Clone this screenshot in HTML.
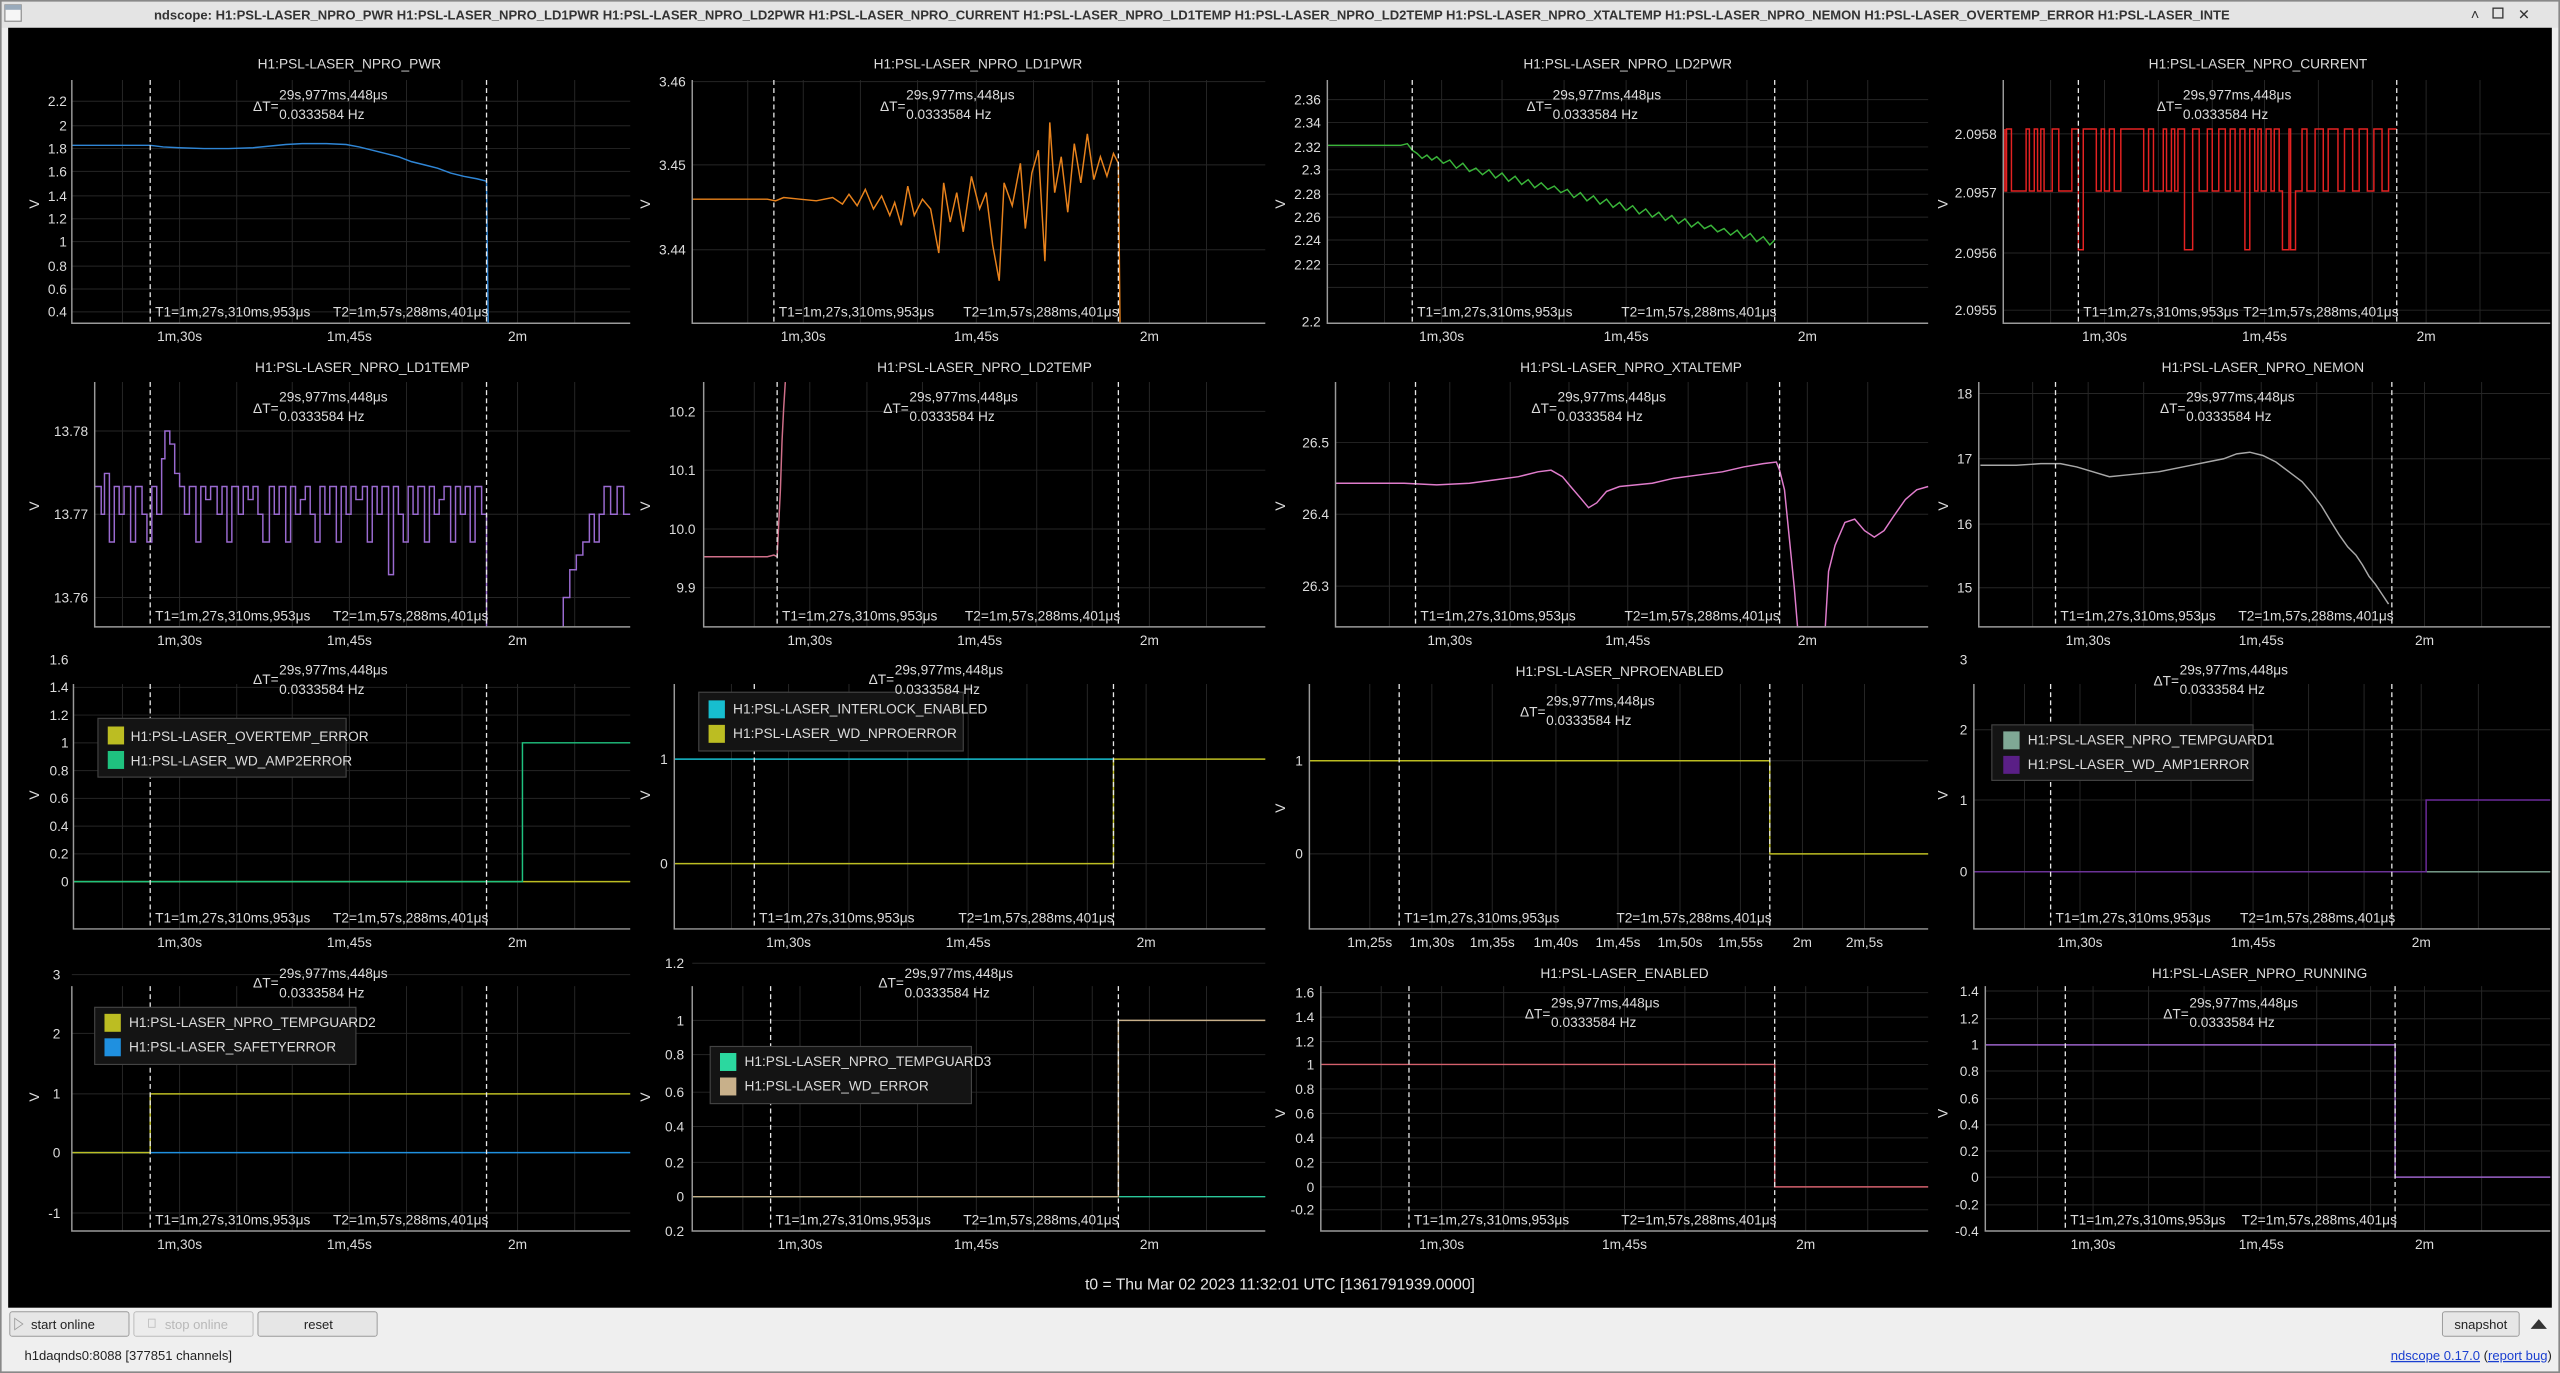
<!DOCTYPE html>
<html><head><meta charset="utf-8"><style>
html,body{margin:0;padding:0;background:#000;overflow:hidden}
svg{display:block}
text{font-family:"Liberation Sans",sans-serif;font-size:8.4px;fill:#dcdcdc}
.t{text-anchor:end}.m{text-anchor:middle}
.ax{stroke:#9a9a9a;stroke-width:0.9;fill:none}
.g{stroke:#262626;stroke-width:0.6}
.d{stroke:#e8e8e8;stroke-width:0.8;stroke-dasharray:3,2}
.tr{fill:none;stroke-width:0.9}
.lg{fill:#141414;stroke:#444;stroke-width:0.7}
</style></head><body>
<svg width="2560" height="1373" viewBox="0 0 1568 841" preserveAspectRatio="none" xmlns="http://www.w3.org/2000/svg">
<rect x="0" y="0" width="1568" height="841" fill="#efefef"/>
<rect x="0" y="0" width="1568" height="17" fill="#e4e4e4"/>
<rect x="3" y="3" width="10" height="10" fill="#f6f6f6" stroke="#8a8a8a" stroke-width="0.7"/>
<rect x="3" y="3" width="10" height="3" fill="#9ab"/>
<text x="730" y="12" class="m" style="font-weight:bold;font-size:8px;fill:#333">ndscope: H1:PSL-LASER_NPRO_PWR H1:PSL-LASER_NPRO_LD1PWR H1:PSL-LASER_NPRO_LD2PWR H1:PSL-LASER_NPRO_CURRENT H1:PSL-LASER_NPRO_LD1TEMP H1:PSL-LASER_NPRO_LD2TEMP H1:PSL-LASER_NPRO_XTALTEMP H1:PSL-LASER_NPRO_NEMON H1:PSL-LASER_OVERTEMP_ERROR H1:PSL-LASER_INTE</text>
<text x="1516" y="12" class="m" style="fill:#333;font-size:9px">˄</text>
<rect x="1527" y="5" width="6" height="6" fill="none" stroke="#333" stroke-width="0.8"/>
<text x="1546" y="12" class="m" style="fill:#333;font-size:9px">✕</text>
<rect x="5" y="17" width="1558" height="784" fill="#000"/>

<!-- P1 -->
<g>
<text x="214" y="42" class="m">H1:PSL-LASER_NPRO_PWR</text>
<path class="g" d="M44,62H386M44,77H386M44,91H386M44,105H386M44,120H386M44,134H386M44,148H386M44,163H386M44,177H386M44,191H386M75,49V198M110,49V198M145,49V198M179,49V198M214,49V198M249,49V198M283,49V198M317,49V198M352,49V198"/>
<g class="t"><text x="41" y="65">2.2</text><text x="41" y="80">2</text><text x="41" y="94">1.8</text><text x="41" y="108">1.6</text><text x="41" y="123">1.4</text><text x="41" y="137">1.2</text><text x="41" y="151">1</text><text x="41" y="166">0.8</text><text x="41" y="180">0.6</text><text x="41" y="194">0.4</text></g>
<polyline class="tr" stroke="#2f86d6" points="44,89 92,89 100,90 110,90.5 125,91 140,91 155,90.5 165,89.5 175,88.5 185,88 200,88 212,88.5 220,90 228,92 236,94 244,96 252,99 260,101 268,103 276,106 284,108 292,109.5 298,111 299,198"/>
<path class="ax" d="M44,49V198H386"/>
<line class="d" x1="92" y1="49" x2="92" y2="198"/><line class="d" x1="298" y1="49" x2="298" y2="198"/>
<text x="155" y="68">ΔT=</text><text x="171" y="61">29s,977ms,448μs</text><text x="171" y="73">0.0333584 Hz</text>
<text x="95" y="194">T1=1m,27s,310ms,953μs</text><text x="204" y="194">T2=1m,57s,288ms,401μs</text>
<text x="110" y="209" class="m">1m,30s</text><text x="214" y="209" class="m">1m,45s</text><text x="317" y="209" class="m">2m</text>
<text x="24" y="125" class="m" transform="rotate(-90 24 125)">V</text>
</g>
<!-- P2 -->
<g>
<text x="599" y="42" class="m">H1:PSL-LASER_NPRO_LD1PWR</text>
<path class="g" d="M424,50H775M424,101H775M424,153H775M458,49V198M492,49V198M527,49V198M562,49V198M598,49V198M633,49V198M669,49V198M704,49V198M739,49V198"/>
<g class="t"><text x="420" y="53">3.46</text><text x="420" y="104">3.45</text><text x="420" y="156">3.44</text></g>
<polyline class="tr" stroke="#e8821c" points="424,122 470,122 475,123 480,121 490,122 500,123 510,121 516,125 520,119 525,126 530,116 535,128 540,120 545,132 548,124 552,138 556,114 560,132 565,122 570,128 575,155 578,112 582,136 586,118 590,142 595,108 600,128 604,118 608,150 612,172 615,112 620,126 625,100 628,140 632,106 636,92 640,160 643,75 646,118 650,96 654,130 658,88 662,112 666,82 670,110 674,96 678,108 682,94 685,100 686,198"/>
<path class="ax" d="M424,49V198H775"/>
<line class="d" x1="474" y1="49" x2="474" y2="198"/><line class="d" x1="685" y1="49" x2="685" y2="198"/>
<text x="539" y="68">ΔT=</text><text x="555" y="61">29s,977ms,448μs</text><text x="555" y="73">0.0333584 Hz</text>
<text x="477" y="194">T1=1m,27s,310ms,953μs</text><text x="590" y="194">T2=1m,57s,288ms,401μs</text>
<text x="492" y="209" class="m">1m,30s</text><text x="598" y="209" class="m">1m,45s</text><text x="704" y="209" class="m">2m</text>
<text x="398" y="125" class="m" transform="rotate(-90 398 125)">V</text>
</g>
<!-- P3 -->
<g>
<text x="997" y="42" class="m">H1:PSL-LASER_NPRO_LD2PWR</text>
<path class="g" d="M813,61H1181M813,75H1181M813,90H1181M813,104H1181M813,119H1181M813,133H1181M813,147H1181M813,162H1181M813,176H1181M848,49V198M883,49V198M920,49V198M958,49V198M996,49V198M1033,49V198M1070,49V198M1107,49V198M1144,49V198"/>
<g class="t"><text x="809" y="64">2.36</text><text x="809" y="78">2.34</text><text x="809" y="93">2.32</text><text x="809" y="107">2.3</text><text x="809" y="122">2.28</text><text x="809" y="136">2.26</text><text x="809" y="150">2.24</text><text x="809" y="165">2.22</text><text x="809" y="200">2.2</text></g>
<polyline class="tr" stroke="#3ab53a" points="813,89 858,89 862,88 865,92 868,94 871,97 874,95 877,98 880,96 884,100 888,98 892,103 896,100 900,105 904,103 908,107 912,104 916,109 920,106 924,111 928,108 932,113 936,110 940,115 944,112 948,116 952,114 956,118 960,116 964,121 968,118 972,123 976,120 980,125 984,122 988,127 992,124 996,129 1000,126 1004,131 1008,128 1012,133 1016,130 1020,135 1024,132 1028,137 1032,134 1036,139 1040,136 1044,140 1048,138 1052,142 1056,140 1060,144 1064,141 1068,146 1072,143 1076,148 1080,145 1084,150 1087,147"/>
<path class="ax" d="M813,49V198H1181"/>
<line class="d" x1="865" y1="49" x2="865" y2="198"/><line class="d" x1="1087" y1="49" x2="1087" y2="198"/>
<text x="935" y="68">ΔT=</text><text x="951" y="61">29s,977ms,448μs</text><text x="951" y="73">0.0333584 Hz</text>
<text x="868" y="194">T1=1m,27s,310ms,953μs</text><text x="993" y="194">T2=1m,57s,288ms,401μs</text>
<text x="883" y="209" class="m">1m,30s</text><text x="996" y="209" class="m">1m,45s</text><text x="1107" y="209" class="m">2m</text>
<text x="787" y="125" class="m" transform="rotate(-90 787 125)">V</text>
</g>
<!-- P4 -->
<g>
<text x="1383" y="42" class="m">H1:PSL-LASER_NPRO_CURRENT</text>
<path class="g" d="M1227,82H1562M1227,118H1562M1227,155H1562M1227,190H1562M1256,49V198M1289,49V198M1322,49V198M1355,49V198M1387,49V198M1420,49V198M1453,49V198M1486,49V198M1519,49V198"/>
<g class="t"><text x="1223" y="85">2.0958</text><text x="1223" y="121">2.0957</text><text x="1223" y="158">2.0956</text><text x="1223" y="193">2.0955</text></g>
<path class="tr" stroke="#e52222" d="M1228,79V117H1229V79H1232V117H1241V79H1243V117H1246V79H1248V117H1250V79H1252V117H1257V79H1261V117H1269V79H1273V153H1276V79H1284V117H1287V79H1289V117H1292V79H1295V117H1299V79H1313V117H1316V79H1319V117H1325V79H1327V117H1330V79H1332V117H1334V79H1338V153H1343V79H1347V117H1352V79H1355V117H1359V79H1363V117H1366V79H1369V117H1372V79H1375V153H1378V79H1381V117H1383V79H1385V117H1388V79H1391V117H1393V79H1396V117H1398V153H1402V79H1403V153H1406V117H1410V79H1413V117H1418V79H1423V117H1426V79H1432V117H1436V79H1441V117H1445V79H1450V117H1454V79H1459V117H1463V79H1468"/>
<path class="ax" d="M1227,49V198H1562"/>
<line class="d" x1="1273" y1="49" x2="1273" y2="198"/><line class="d" x1="1468" y1="49" x2="1468" y2="198"/>
<text x="1321" y="68">ΔT=</text><text x="1337" y="61">29s,977ms,448μs</text><text x="1337" y="73">0.0333584 Hz</text>
<text x="1276" y="194">T1=1m,27s,310ms,953μs</text><text x="1374" y="194">T2=1m,57s,288ms,401μs</text>
<text x="1289" y="209" class="m">1m,30s</text><text x="1387" y="209" class="m">1m,45s</text><text x="1486" y="209" class="m">2m</text>
<text x="1193" y="125" class="m" transform="rotate(-90 1193 125)">V</text>
</g>

<!-- P5 -->
<g>
<text x="222" y="228" class="m">H1:PSL-LASER_NPRO_LD1TEMP</text>
<path class="g" d="M58,264H386M58,315H386M58,366H386M75,234V384M110,234V384M145,234V384M179,234V384M214,234V384M249,234V384M283,234V384M317,234V384M352,234V384"/>
<g class="t"><text x="54" y="267">13.78</text><text x="54" y="318">13.77</text><text x="54" y="369">13.76</text></g>
<path class="tr" stroke="#9a6ad0" d="M58,298H62V315H64V290H67V332H70V298H73V315H76V298H80V332H83V298H87V315H90V332H93V298H96V315H99V281H101V264H104V272H107V290H110V298H113V315H116V298H120V332H123V298H126V306H129V298H133V315H136V298H139V332H142V298H146V315H149V298H152V306H155V298H158V315H161V332H165V298H168V315H171V298H175V332H178V298H181V315H184V306H187V298H190V315H193V332H196V298H199V315H202V298H206V332H209V298H212V315H215V298H218V306H222V298H225V332H228V298H231V315H234V298H238V352H241V298H244V315H247V332H250V298H253V315H256V298H260V332H263V298H266V315H269V306H272V298H276V332H279V298H282V315H285V298H288V332H291V298H295V315H298V384M345,384V366H349V349H353V340H357V332H361V315H364V332H367V315H370V298H374V315H378V298H382V315H386"/>
<path class="ax" d="M58,234V384H386"/>
<line class="d" x1="92" y1="234" x2="92" y2="384"/><line class="d" x1="298" y1="234" x2="298" y2="384"/>
<text x="155" y="253">ΔT=</text><text x="171" y="246">29s,977ms,448μs</text><text x="171" y="258">0.0333584 Hz</text>
<text x="95" y="380">T1=1m,27s,310ms,953μs</text><text x="204" y="380">T2=1m,57s,288ms,401μs</text>
<text x="110" y="395" class="m">1m,30s</text><text x="214" y="395" class="m">1m,45s</text><text x="317" y="395" class="m">2m</text>
<text x="24" y="310" class="m" transform="rotate(-90 24 310)">V</text>
</g>
<!-- P6 -->
<g>
<text x="603" y="228" class="m">H1:PSL-LASER_NPRO_LD2TEMP</text>
<path class="g" d="M431,252H775M431,288H775M431,324H775M431,360H775M462,234V384M496,234V384M531,234V384M565,234V384M600,234V384M635,234V384M669,234V384M704,234V384M739,234V384"/>
<g class="t"><text x="426" y="255">10.2</text><text x="426" y="291">10.1</text><text x="426" y="327">10.0</text><text x="426" y="363">9.9</text></g>
<polyline class="tr" stroke="#d0708a" points="431,341 470,341 474,340 476,341 477,320 478,300 479,270 480,250 481,234"/>
<path class="ax" d="M431,234V384H775"/>
<line class="d" x1="476" y1="234" x2="476" y2="384"/><line class="d" x1="685" y1="234" x2="685" y2="384"/>
<text x="541" y="253">ΔT=</text><text x="557" y="246">29s,977ms,448μs</text><text x="557" y="258">0.0333584 Hz</text>
<text x="479" y="380">T1=1m,27s,310ms,953μs</text><text x="591" y="380">T2=1m,57s,288ms,401μs</text>
<text x="496" y="395" class="m">1m,30s</text><text x="600" y="395" class="m">1m,45s</text><text x="704" y="395" class="m">2m</text>
<text x="398" y="310" class="m" transform="rotate(-90 398 310)">V</text>
</g>
<!-- P7 -->
<g>
<text x="999" y="228" class="m">H1:PSL-LASER_NPRO_XTALTEMP</text>
<path class="g" d="M818,271H1181M818,315H1181M818,359H1181M851,234V384M888,234V384M925,234V384M961,234V384M997,234V384M1034,234V384M1070,234V384M1107,234V384M1144,234V384"/>
<g class="t"><text x="814" y="274">26.5</text><text x="814" y="318">26.4</text><text x="814" y="362">26.3</text></g>
<polyline class="tr" stroke="#e07ccc" points="818,296 860,296 880,297 900,296 915,294 930,292 942,289 950,288 957,292 962,298 968,305 973,311 978,308 984,301 992,298 1002,297 1012,296 1025,293 1040,291 1055,289 1068,286 1080,284 1088,283 1090,288 1093,300 1096,330 1099,360 1101,384 1118,384 1120,350 1124,334 1130,320 1136,318 1142,325 1148,329 1154,325 1160,316 1167,306 1174,300 1181,298"/>
<path class="ax" d="M818,234V384H1181"/>
<line class="d" x1="867" y1="234" x2="867" y2="384"/><line class="d" x1="1090" y1="234" x2="1090" y2="384"/>
<text x="938" y="253">ΔT=</text><text x="954" y="246">29s,977ms,448μs</text><text x="954" y="258">0.0333584 Hz</text>
<text x="870" y="380">T1=1m,27s,310ms,953μs</text><text x="995" y="380">T2=1m,57s,288ms,401μs</text>
<text x="888" y="395" class="m">1m,30s</text><text x="997" y="395" class="m">1m,45s</text><text x="1107" y="395" class="m">2m</text>
<text x="787" y="310" class="m" transform="rotate(-90 787 310)">V</text>
</g>
<!-- P8 -->
<g>
<text x="1386" y="228" class="m">H1:PSL-LASER_NPRO_NEMON</text>
<path class="g" d="M1212,241H1562M1212,281H1562M1212,321H1562M1212,360H1562M1245,234V384M1279,234V384M1313,234V384M1348,234V384M1385,234V384M1419,234V384M1453,234V384M1485,234V384M1520,234V384"/>
<g class="t"><text x="1208" y="244">18</text><text x="1208" y="284">17</text><text x="1208" y="324">16</text><text x="1208" y="363">15</text></g>
<polyline class="tr" stroke="#a8a8a8" points="1213,285 1235,285 1250,284 1262,284 1272,286 1282,289 1292,292 1302,291 1312,290 1322,289 1332,287 1342,285 1352,283 1362,281 1370,278 1378,277 1386,279 1394,283 1402,289 1410,295 1416,302 1422,310 1428,320 1433,328 1438,335 1443,340 1447,346 1451,353 1455,358 1459,364 1463,370"/>
<path class="ax" d="M1212,234V384H1562"/>
<line class="d" x1="1259" y1="234" x2="1259" y2="384"/><line class="d" x1="1465" y1="234" x2="1465" y2="384"/>
<text x="1323" y="253">ΔT=</text><text x="1339" y="246">29s,977ms,448μs</text><text x="1339" y="258">0.0333584 Hz</text>
<text x="1262" y="380">T1=1m,27s,310ms,953μs</text><text x="1371" y="380">T2=1m,57s,288ms,401μs</text>
<text x="1279" y="395" class="m">1m,30s</text><text x="1385" y="395" class="m">1m,45s</text><text x="1485" y="395" class="m">2m</text>
<text x="1193" y="310" class="m" transform="rotate(-90 1193 310)">V</text>
</g>

<!-- P9 -->
<g>
<path class="g" d="M45,421H386M45,438H386M45,455H386M45,472H386M45,489H386M45,506H386M45,523H386M45,540H386M75,419V569M110,419V569M145,419V569M179,419V569M214,419V569M249,419V569M283,419V569M317,419V569M352,419V569"/>
<g class="t"><text x="42" y="407">1.6</text><text x="42" y="424">1.4</text><text x="42" y="441">1.2</text><text x="42" y="458">1</text><text x="42" y="475">0.8</text><text x="42" y="492">0.6</text><text x="42" y="509">0.4</text><text x="42" y="526">0.2</text><text x="42" y="543">0</text></g>
<path class="tr" stroke="#bcbd22" d="M45,540H386"/>
<path class="tr" stroke="#1fc27f" d="M45,540H320V455H386"/>
<path class="ax" d="M45,419V569H386"/>
<line class="d" x1="92" y1="419" x2="92" y2="569"/><line class="d" x1="298" y1="419" x2="298" y2="569"/>
<rect class="lg" x="60" y="440" width="152" height="36"/>
<rect x="66" y="445" width="10" height="11" fill="#bcbd22"/><text x="80" y="454">H1:PSL-LASER_OVERTEMP_ERROR</text>
<rect x="66" y="460" width="10" height="11" fill="#1fc27f"/><text x="80" y="469">H1:PSL-LASER_WD_AMP2ERROR</text>
<text x="155" y="419">ΔT=</text><text x="171" y="413">29s,977ms,448μs</text><text x="171" y="425">0.0333584 Hz</text>
<text x="95" y="565">T1=1m,27s,310ms,953μs</text><text x="204" y="565">T2=1m,57s,288ms,401μs</text>
<text x="110" y="580" class="m">1m,30s</text><text x="214" y="580" class="m">1m,45s</text><text x="317" y="580" class="m">2m</text>
<text x="24" y="487" class="m" transform="rotate(-90 24 487)">V</text>
</g>
<!-- P10 -->
<g>
<path class="g" d="M413,465H775M413,529H775M448,419V569M483,419V569M520,419V569M556,419V569M593,419V569M629,419V569M666,419V569M702,419V569M739,419V569"/>
<g class="t"><text x="409" y="468">1</text><text x="409" y="532">0</text></g>
<path class="tr" stroke="#17becf" d="M413,465H682"/>
<path class="tr" stroke="#bcbd22" d="M413,529H682V465H775"/>
<path class="ax" d="M413,419V569H775"/>
<line class="d" x1="462" y1="419" x2="462" y2="569"/><line class="d" x1="682" y1="419" x2="682" y2="569"/>
<rect class="lg" x="428" y="424" width="162" height="36"/>
<rect x="434" y="429" width="10" height="11" fill="#17becf"/><text x="449" y="437">H1:PSL-LASER_INTERLOCK_ENABLED</text>
<rect x="434" y="444" width="10" height="11" fill="#bcbd22"/><text x="449" y="452">H1:PSL-LASER_WD_NPROERROR</text>
<text x="532" y="419">ΔT=</text><text x="548" y="413">29s,977ms,448μs</text><text x="548" y="425">0.0333584 Hz</text>
<text x="465" y="565">T1=1m,27s,310ms,953μs</text><text x="587" y="565">T2=1m,57s,288ms,401μs</text>
<text x="483" y="580" class="m">1m,30s</text><text x="593" y="580" class="m">1m,45s</text><text x="702" y="580" class="m">2m</text>
<text x="398" y="487" class="m" transform="rotate(-90 398 487)">V</text>
</g>
<!-- P11 -->
<g>
<text x="992" y="414" class="m">H1:PSL-LASER_NPROENABLED</text>
<path class="g" d="M802,466H1181M802,523H1181M839,419V569M877,419V569M914,419V569M953,419V569M991,419V569M1029,419V569M1066,419V569M1104,419V569M1142,419V569"/>
<g class="t"><text x="798" y="469">1</text><text x="798" y="526">0</text></g>
<path class="tr" stroke="#bcbd22" d="M802,466H1084V523H1181"/>
<path class="ax" d="M802,419V569H1181"/>
<line class="d" x1="857" y1="419" x2="857" y2="569"/><line class="d" x1="1084" y1="419" x2="1084" y2="569"/>
<text x="931" y="439">ΔT=</text><text x="947" y="432">29s,977ms,448μs</text><text x="947" y="444">0.0333584 Hz</text>
<text x="860" y="565">T1=1m,27s,310ms,953μs</text><text x="990" y="565">T2=1m,57s,288ms,401μs</text>
<text x="839" y="580" class="m">1m,25s</text><text x="877" y="580" class="m">1m,30s</text><text x="914" y="580" class="m">1m,35s</text><text x="953" y="580" class="m">1m,40s</text><text x="991" y="580" class="m">1m,45s</text><text x="1029" y="580" class="m">1m,50s</text><text x="1066" y="580" class="m">1m,55s</text><text x="1104" y="580" class="m">2m</text><text x="1142" y="580" class="m">2m,5s</text>
<text x="787" y="495" class="m" transform="rotate(-90 787 495)">V</text>
</g>
<!-- P12 -->
<g>
<path class="g" d="M1209,447H1562M1209,490H1562M1209,534H1562M1240,419V569M1274,419V569M1308,419V569M1342,419V569M1380,419V569M1414,419V569M1448,419V569M1483,419V569M1518,419V569"/>
<g class="t"><text x="1205" y="407">3</text><text x="1205" y="450">2</text><text x="1205" y="493">1</text><text x="1205" y="537">0</text></g>
<path class="tr" stroke="#7fa895" d="M1209,534H1562"/>
<path class="tr" stroke="#6b2a9a" d="M1209,534H1486V490H1562"/>
<path class="ax" d="M1209,419V569H1562"/>
<line class="d" x1="1256" y1="419" x2="1256" y2="569"/><line class="d" x1="1465" y1="419" x2="1465" y2="569"/>
<rect class="lg" x="1220" y="444" width="160" height="34"/>
<rect x="1227" y="448" width="10" height="11" fill="#7fa895"/><text x="1242" y="456">H1:PSL-LASER_NPRO_TEMPGUARD1</text>
<rect x="1227" y="463" width="10" height="11" fill="#5a1f86"/><text x="1242" y="471">H1:PSL-LASER_WD_AMP1ERROR</text>
<text x="1319" y="420">ΔT=</text><text x="1335" y="413">29s,977ms,448μs</text><text x="1335" y="425">0.0333584 Hz</text>
<text x="1259" y="565">T1=1m,27s,310ms,953μs</text><text x="1372" y="565">T2=1m,57s,288ms,401μs</text>
<text x="1274" y="580" class="m">1m,30s</text><text x="1380" y="580" class="m">1m,45s</text><text x="1483" y="580" class="m">2m</text>
<text x="1193" y="487" class="m" transform="rotate(-90 1193 487)">V</text>
</g>

<!-- P13 -->
<g>
<path class="g" d="M44,597H386M44,633H386M44,670H386M44,706H386M44,743H386M75,604V754M110,604V754M145,604V754M179,604V754M214,604V754M249,604V754M283,604V754M317,604V754M352,604V754"/>
<g class="t"><text x="37" y="600">3</text><text x="37" y="636">2</text><text x="37" y="673">1</text><text x="37" y="709">0</text><text x="37" y="746">-1</text></g>
<path class="tr" stroke="#1f90e0" d="M44,706H386"/>
<path class="tr" stroke="#bcbd22" d="M44,706H92V670H386"/>
<path class="ax" d="M44,604V754H386"/>
<line class="d" x1="92" y1="604" x2="92" y2="754"/><line class="d" x1="298" y1="604" x2="298" y2="754"/>
<rect class="lg" x="58" y="617" width="160" height="35"/>
<rect x="64" y="621" width="10" height="11" fill="#bcbd22"/><text x="79" y="629">H1:PSL-LASER_NPRO_TEMPGUARD2</text>
<rect x="64" y="636" width="10" height="11" fill="#1f90e0"/><text x="79" y="644">H1:PSL-LASER_SAFETYERROR</text>
<text x="155" y="605">ΔT=</text><text x="171" y="599">29s,977ms,448μs</text><text x="171" y="611">0.0333584 Hz</text>
<text x="95" y="750">T1=1m,27s,310ms,953μs</text><text x="204" y="750">T2=1m,57s,288ms,401μs</text>
<text x="110" y="765" class="m">1m,30s</text><text x="214" y="765" class="m">1m,45s</text><text x="317" y="765" class="m">2m</text>
<text x="24" y="672" class="m" transform="rotate(-90 24 672)">V</text>
</g>
<!-- P14 -->
<g>
<path class="g" d="M424,590H775M424,625H775M424,646H775M424,669H775M424,690H775M424,712H775M424,733H775M455,604V754M490,604V754M527,604V754M562,604V754M598,604V754M633,604V754M669,604V754M704,604V754M739,604V754"/>
<g class="t"><text x="419" y="593">1.2</text><text x="419" y="628">1</text><text x="419" y="649">0.8</text><text x="419" y="672">0.6</text><text x="419" y="693">0.4</text><text x="419" y="715">0.2</text><text x="419" y="736">0</text><text x="419" y="757">0.2</text></g>
<path class="tr" stroke="#2bc79a" d="M424,733H775"/>
<path class="tr" stroke="#c8b08a" d="M424,733H685V625H775"/>
<path class="ax" d="M424,604V754H775"/>
<line class="d" x1="472" y1="604" x2="472" y2="754"/><line class="d" x1="685" y1="604" x2="685" y2="754"/>
<rect class="lg" x="435" y="641" width="160" height="35"/>
<rect x="441" y="645" width="10" height="11" fill="#2bd89f"/><text x="456" y="653">H1:PSL-LASER_NPRO_TEMPGUARD3</text>
<rect x="441" y="660" width="10" height="11" fill="#c8b08a"/><text x="456" y="668">H1:PSL-LASER_WD_ERROR</text>
<text x="538" y="605">ΔT=</text><text x="554" y="599">29s,977ms,448μs</text><text x="554" y="611">0.0333584 Hz</text>
<text x="475" y="750">T1=1m,27s,310ms,953μs</text><text x="590" y="750">T2=1m,57s,288ms,401μs</text>
<text x="490" y="765" class="m">1m,30s</text><text x="598" y="765" class="m">1m,45s</text><text x="704" y="765" class="m">2m</text>
<text x="398" y="672" class="m" transform="rotate(-90 398 672)">V</text>
</g>
<!-- P15 -->
<g>
<text x="995" y="599" class="m">H1:PSL-LASER_ENABLED</text>
<path class="g" d="M809,608H1181M809,623H1181M809,638H1181M809,652H1181M809,667H1181M809,682H1181M809,697H1181M809,712H1181M809,727H1181M809,741H1181M846,604V754M883,604V754M921,604V754M958,604V754M995,604V754M1032,604V754M1069,604V754M1106,604V754M1144,604V754"/>
<g class="t"><text x="805" y="611">1.6</text><text x="805" y="626">1.4</text><text x="805" y="641">1.2</text><text x="805" y="655">1</text><text x="805" y="670">0.8</text><text x="805" y="685">0.6</text><text x="805" y="700">0.4</text><text x="805" y="715">0.2</text><text x="805" y="730">0</text><text x="805" y="744">-0.2</text></g>
<path class="tr" stroke="#d4606c" d="M809,652H1087V727H1181"/>
<path class="ax" d="M809,604V754H1181"/>
<line class="d" x1="863" y1="604" x2="863" y2="754"/><line class="d" x1="1087" y1="604" x2="1087" y2="754"/>
<text x="934" y="624">ΔT=</text><text x="950" y="617">29s,977ms,448μs</text><text x="950" y="629">0.0333584 Hz</text>
<text x="866" y="750">T1=1m,27s,310ms,953μs</text><text x="993" y="750">T2=1m,57s,288ms,401μs</text>
<text x="883" y="765" class="m">1m,30s</text><text x="995" y="765" class="m">1m,45s</text><text x="1106" y="765" class="m">2m</text>
<text x="787" y="682" class="m" transform="rotate(-90 787 682)">V</text>
</g>
<!-- P16 -->
<g>
<text x="1384" y="599" class="m">H1:PSL-LASER_NPRO_RUNNING</text>
<path class="g" d="M1216,607H1562M1216,624H1562M1216,640H1562M1216,656H1562M1216,673H1562M1216,689H1562M1216,705H1562M1216,721H1562M1216,738H1562M1248,604V754M1282,604V754M1316,604V754M1350,604V754M1385,604V754M1419,604V754M1452,604V754M1485,604V754M1520,604V754"/>
<g class="t"><text x="1212" y="610">1.4</text><text x="1212" y="627">1.2</text><text x="1212" y="643">1</text><text x="1212" y="659">0.8</text><text x="1212" y="676">0.6</text><text x="1212" y="692">0.4</text><text x="1212" y="708">0.2</text><text x="1212" y="724">0</text><text x="1212" y="741">-0.2</text><text x="1212" y="757">-0.4</text></g>
<path class="tr" stroke="#9a62c8" d="M1216,640H1467V721H1562"/>
<path class="ax" d="M1216,604V754H1562"/>
<line class="d" x1="1265" y1="604" x2="1265" y2="754"/><line class="d" x1="1467" y1="604" x2="1467" y2="754"/>
<text x="1325" y="624">ΔT=</text><text x="1341" y="617">29s,977ms,448μs</text><text x="1341" y="629">0.0333584 Hz</text>
<text x="1268" y="750">T1=1m,27s,310ms,953μs</text><text x="1373" y="750">T2=1m,57s,288ms,401μs</text>
<text x="1282" y="765" class="m">1m,30s</text><text x="1385" y="765" class="m">1m,45s</text><text x="1485" y="765" class="m">2m</text>
<text x="1193" y="682" class="m" transform="rotate(-90 1193 682)">V</text>
</g>

<text x="784" y="790" class="m" style="font-size:9.6px;fill:#e6e6e6">t0 = Thu Mar 02 2023 11:32:01 UTC [1361791939.0000]</text>

<g style="font-size:8px">
<rect x="6" y="803.5" width="73" height="15" rx="1.5" fill="#e6e6e6" stroke="#9a9a9a" stroke-width="0.6"/>
<path d="M9,807.5L14,811L9,814.5Z" fill="none" stroke="#999" stroke-width="0.5"/>
<text x="19" y="814" style="fill:#222;font-size:8px">start online</text>
<rect x="82" y="803.5" width="73" height="15" rx="1.5" fill="#ececec" stroke="#bbb" stroke-width="0.6"/>
<rect x="91" y="808" width="4" height="5" fill="none" stroke="#bbb" stroke-width="0.5"/>
<text x="101" y="814" style="fill:#b8b8b8;font-size:8px">stop online</text>
<rect x="158" y="803.5" width="73" height="15" rx="1.5" fill="#e6e6e6" stroke="#9a9a9a" stroke-width="0.6"/>
<text x="195" y="814" class="m" style="fill:#222;font-size:8px">reset</text>
<text x="15" y="833" style="fill:#222;font-size:8px">h1daqnds0:8088  [377851 channels]</text>
<rect x="1496" y="803.5" width="47" height="15" rx="1.5" fill="#e6e6e6" stroke="#9a9a9a" stroke-width="0.6"/>
<text x="1519.5" y="814" class="m" style="fill:#222;font-size:8px">snapshot</text>
<path d="M1550,814L1555,808L1560,814Z" fill="#333"/>
<text x="1563" y="833" class="t" style="font-size:8px;fill:#222"><tspan style="fill:#1a3fd0;text-decoration:underline">ndscope 0.17.0</tspan> (<tspan style="fill:#1a3fd0;text-decoration:underline">report bug</tspan>)</text>
</g>
<rect x="0.5" y="0.5" width="1567" height="840" fill="none" stroke="#888" stroke-width="1"/>
</svg>
</body></html>
